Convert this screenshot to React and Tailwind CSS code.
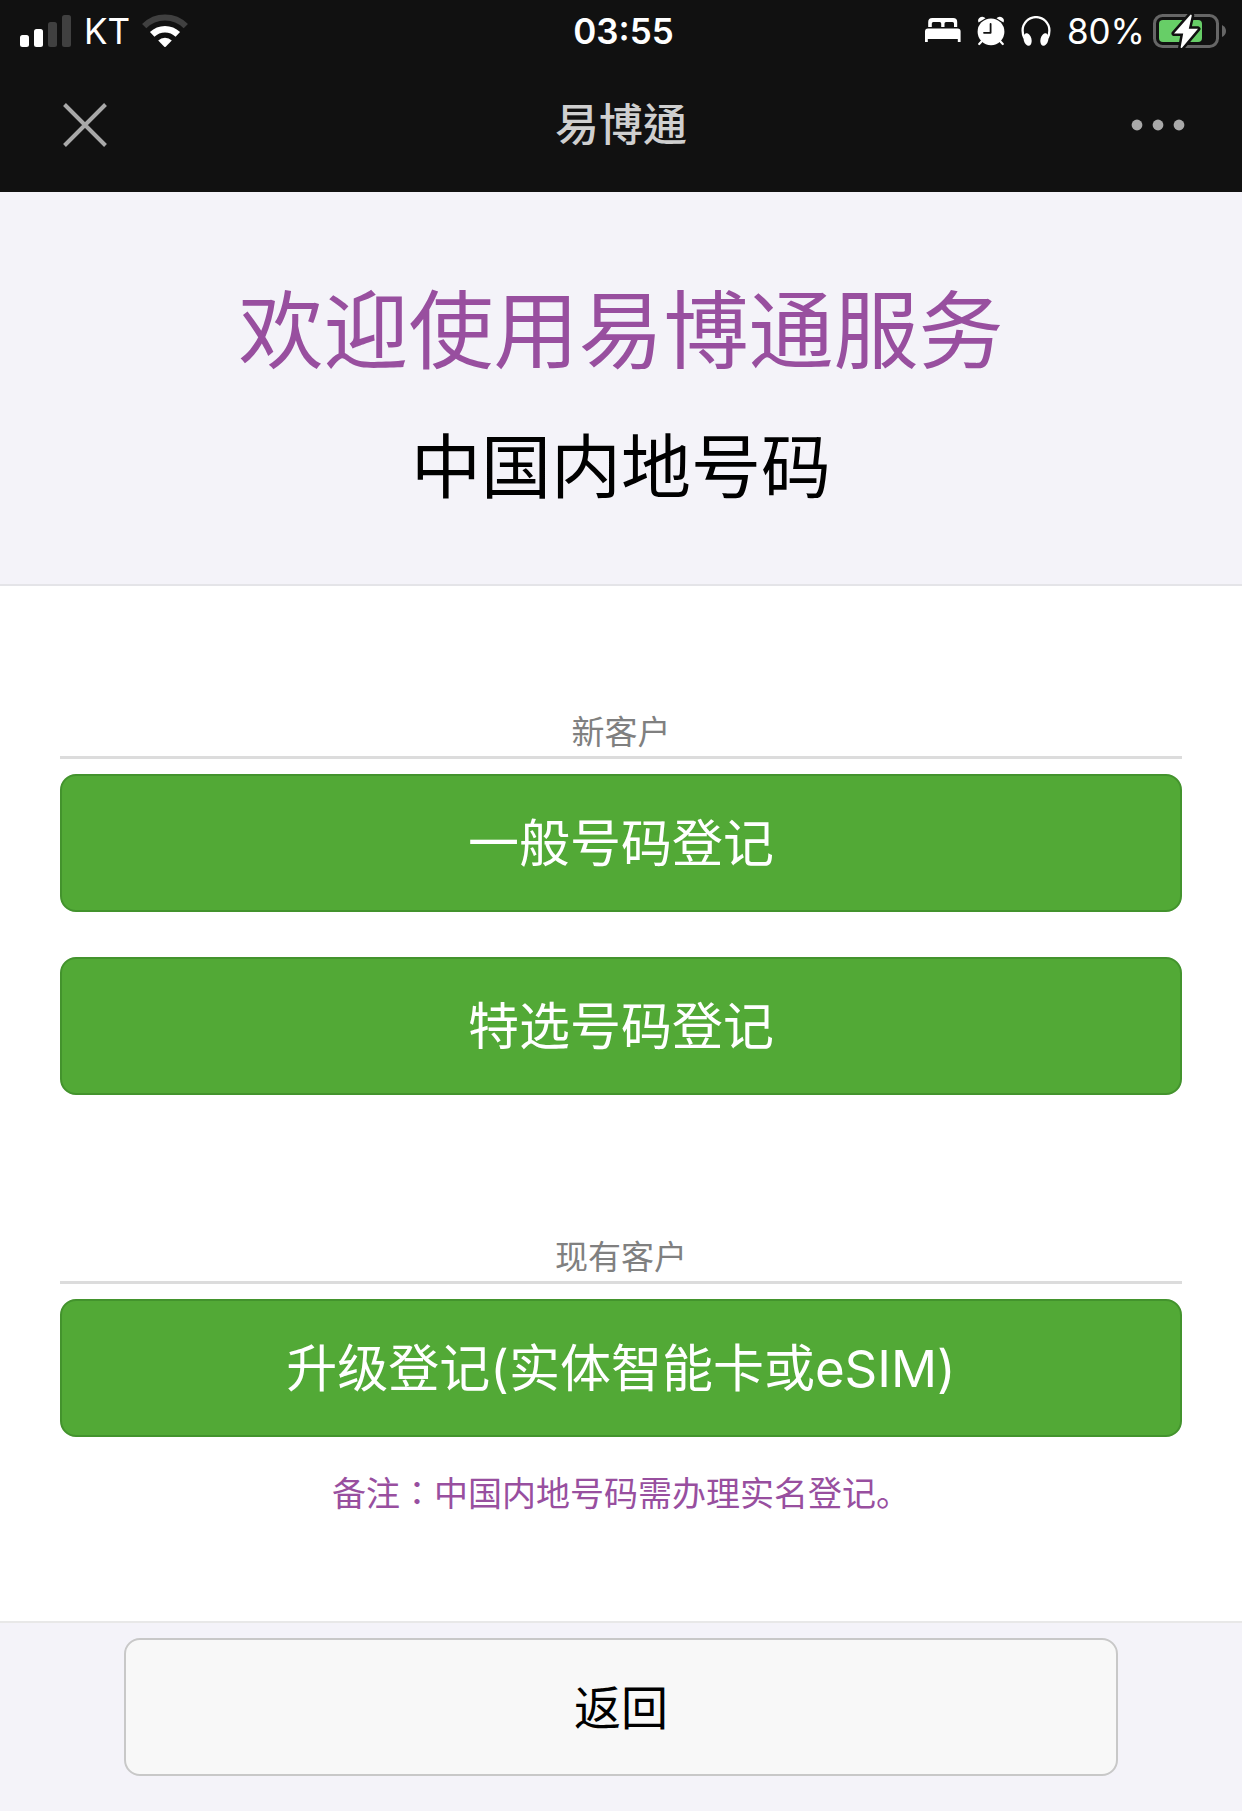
const SignalIcon = () => (
  <svg width="52" height="32" viewBox="0 0 52 32" aria-hidden="true">
    <rect x="0" y="20" width="9" height="12" rx="2.5" fill="#fff" />
    <rect x="14" y="14" width="9" height="18" rx="2.5" fill="#fff" />
    <rect x="28" y="7" width="9" height="25" rx="2.5" fill="#404040" />
    <rect x="42" y="0" width="9" height="32" rx="2.5" fill="#404040" />
  </svg>
);

const WifiIcon = () => (
  <svg width="46" height="34" viewBox="0 0 46 34" fill="none" aria-hidden="true">
    <path d="M2.2 12.2A29.5 29.5 0 0 1 43.8 12.2" stroke="#404040" strokeWidth="6" />
    <path d="M10.2 20.3A18.5 18.5 0 0 1 35.8 20.3" stroke="#fff" strokeWidth="6.5" />
    <path d="M16.2 26.6A9.8 9.8 0 0 1 29.8 26.6L23.7 32.8Q23 33.4 22.3 32.8Z" fill="#fff" />
  </svg>
);

const BedIcon = () => (
  <svg width="36" height="26" viewBox="0 0 36 26" fill="#fff" aria-hidden="true">
    <path d="M3.2 9V4Q3.2 0 7.2 0H28.2Q32.2 0 32.2 4V9H29V5.5Q29 4 27.5 4H21Q19.5 4 19.5 5.5V9H16.2V5.5Q16.2 4 14.7 4H8.3Q6.8 4 6.8 5.5V9Z" />
    <path d="M0 24V13.5Q0 10.5 3 10.5H32.6Q35.6 10.5 35.6 13.5V24H32.8V21H2.8V24Z" />
  </svg>
);

const AlarmIcon = () => (
  <svg width="28" height="30" viewBox="0 0 28 30" fill="none" aria-hidden="true">
    <path d="M1.5 6.5Q0 2.5 3.8 1Q6.5 0 8.5 2.2Z" fill="#fff" />
    <path d="M26.5 6.5Q28 2.5 24.2 1Q21.5 0 19.5 2.2Z" fill="#fff" />
    <path d="M5 25L2.2 28M23 25L25.8 28" stroke="#fff" strokeWidth="2.2" strokeLinecap="round" />
    <circle cx="14" cy="15.8" r="13.4" fill="#fff" />
    <path d="M13.6 8V16.8H7" stroke="#111" strokeWidth="1.8" strokeLinecap="round" strokeLinejoin="round" />
  </svg>
);

const HeadphonesIcon = () => (
  <svg width="30" height="31" viewBox="0 0 30 31" fill="none" aria-hidden="true">
    <path d="M3.3 22Q1.6 18.5 1.6 14.5A13.2 13.2 0 0 1 28.4 14.5Q28.4 18.5 26.7 22" stroke="#fff" strokeWidth="2.3" />
    <ellipse cx="6.6" cy="23.5" rx="3.9" ry="6.4" transform="rotate(-14 6.6 23.5)" fill="#fff" />
    <ellipse cx="23.4" cy="23.5" rx="3.9" ry="6.4" transform="rotate(14 23.4 23.5)" fill="#fff" />
  </svg>
);

const BatteryIcon = () => (
  <svg width="74" height="36" viewBox="0 0 74 36" fill="none" aria-hidden="true">
    <rect x="1.5" y="2.5" width="63" height="31" rx="8" stroke="#666" strokeWidth="3" />
    <rect x="6" y="7" width="43" height="22" rx="4" fill="#67ce67" />
    <path d="M69 12Q73 14 73 18T69 24Z" fill="#666" />
    <path
      d="M37.2 2L21 20.5H30.2L27.6 34.6Q28.2 35.4 29 34.8L45 15.8H35.8L38.8 2.4Q38 1 37.2 2Z"
      fill="#fff"
      stroke="#111"
      strokeWidth="5"
      strokeLinejoin="round"
      paintOrder="stroke"
    />
  </svg>
);

const CloseIcon = () => (
  <svg width="44" height="44" viewBox="0 0 44 44" aria-hidden="true">
    <path d="M1.5 1.5L42.5 42.5M42.5 1.5L1.5 42.5" stroke="#a9a9a9" strokeWidth="4" />
  </svg>
);

const MoreIcon = () => (
  <svg width="54" height="12" viewBox="0 0 54 12" fill="#a9a9a9" aria-hidden="true">
    <circle cx="6" cy="6" r="5.4" />
    <circle cx="27" cy="6" r="5.4" />
    <circle cx="48" cy="6" r="5.4" />
  </svg>
);

const StatusBar = () => (
  <div className="grid h-[62px] grid-cols-[1fr_auto_1fr] items-center pl-5 pr-[15px] text-[35px] leading-none text-white">
    <div className="flex items-center gap-3">
      <SignalIcon />
      <span>KT</span>
      <WifiIcon />
    </div>
    <span className="font-semibold">03:55</span>
    <div className="flex items-center justify-end gap-4">
      <BedIcon />
      <AlarmIcon />
      <HeadphonesIcon />
      <div className="flex items-center gap-2">
        <span>80%</span>
        <BatteryIcon />
      </div>
    </div>
  </div>
);

const NavBar = () => (
  <div className="grid h-[130px] grid-cols-[1fr_auto_1fr] items-center px-[57px] pb-1">
    <button type="button" aria-label="关闭" className="justify-self-start p-1.5">
      <CloseIcon />
    </button>
    <span className="font-['Inter','Noto_Sans_CJK_TC',sans-serif] text-[44px] font-medium leading-none text-[#cfcfcf]">
      易博通
    </span>
    <button type="button" aria-label="更多" className="justify-self-end">
      <MoreIcon />
    </button>
  </div>
);

const SectionTitle = ({ children }) => (
  <h3 className="mb-[15px] border-b-[3px] border-[#dcdcdc] text-center text-[33px] leading-[48px] text-[#808080]">
    {children}
  </h3>
);

const GreenButton = ({ children }) => (
  <button
    type="button"
    className="h-[138px] w-full rounded-2xl border-2 border-[#43932d] bg-[#52a936] text-[51px] leading-none text-white"
  >
    {children}
  </button>
);

const App = () => {
  return (
    <div className="flex min-h-screen flex-col bg-[#f4f3f9] font-['Inter','Noto_Sans_CJK_SC',sans-serif]">
      <header className="bg-[#111]">
        <StatusBar />
        <NavBar />
      </header>

      <div className="border-b-2 border-[#e4e4e8] pb-16 pt-[80px] text-center">
        <h1 className="text-[85px] leading-[120px] text-[#984f9f]">欢迎使用易博通服务</h1>
        <h2 className="mt-6 text-[70px] leading-[104px] text-black">中国内地号码</h2>
      </div>

      <main className="bg-white px-[60px] pb-[102px] pt-[122px]">
        <section>
          <SectionTitle>新客户</SectionTitle>
          <div className="flex flex-col gap-[45px]">
            <GreenButton>一般号码登记</GreenButton>
            <GreenButton>特选号码登记</GreenButton>
          </div>
        </section>
        <section className="mt-[138px]">
          <SectionTitle>现有客户</SectionTitle>
          <GreenButton>升级登记(实体智能卡或eSIM)</GreenButton>
          <p className="mt-[30px] text-center text-[34px] leading-[50px] text-[#984f9f]">
            备注<span className="font-['Noto_Sans_CJK_TC',sans-serif]">：</span>
            中国内地号码需办理实名登记。
          </p>
        </section>
      </main>

      <footer className="border-t-2 border-[#e8e8e8] px-[124px] pb-9 pt-[15px]">
        <button
          type="button"
          className="h-[138px] w-full rounded-2xl border-2 border-[#c8c8c8] bg-[#f8f8f8] text-[47px] leading-none text-black"
        >
          返回
        </button>
      </footer>
    </div>
  );
};

export default App;
